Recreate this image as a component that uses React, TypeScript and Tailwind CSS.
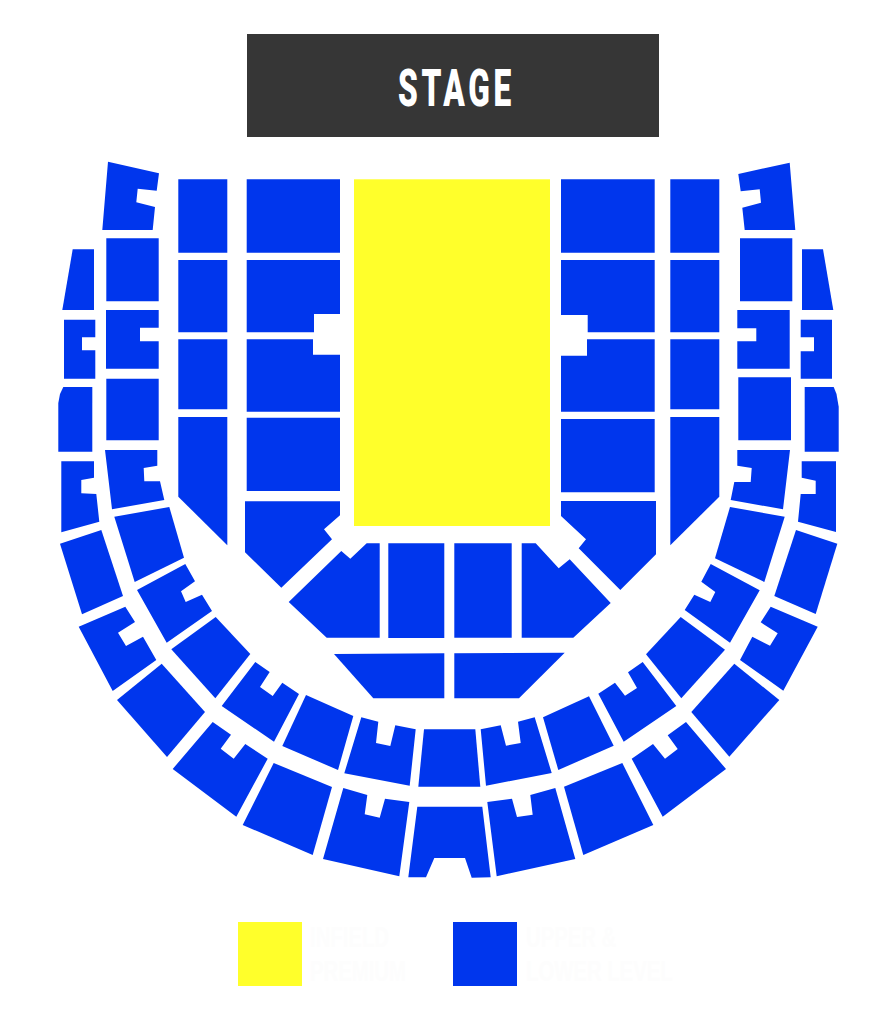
const BLUE = "#0036ed";

// seat blocks, page coordinates (svg viewBox starts at the page origin)
const blocks: string[] = [
  // far left column
  "72.7,249.3 94,249.3 94,310 62.3,310",
  "64,319.7 95.3,319.7 95.3,337.3 82,337.3 82,350.3 95.3,350.3 95.3,378.7 64,378.7",
  "63.3,387 92.3,387 92.3,451.7 58.3,451.7 58.3,403 60,394",
  "61.3,461.3 94,461.3 94,477.7 81.3,480 81.3,493.3 96.3,494 99.3,521.7 61.3,532.3",
  "60,543.7 101.3,530 123,596 82,614.3",
  "78.7,626.7 125.3,606.7 135,622 118,632.7 126,646 143,636.7 156.3,660 112.7,691",
  "117,700 161.7,663.7 205,712 167,757",
  // left column 2
  "108,161.7 159,173.3 156.7,190.7 137.7,188.7 136.3,202.3 155,207 152.7,230 102.3,230",
  "106.3,238.3 158.7,238.3 158.7,301.3 106.3,301.3",
  "106,310 158.7,310 158.7,327.7 140,327.7 140,341.3 158.7,341.3 158.7,368.7 106,368.7",
  "106.3,378.7 158.7,378.7 158.7,440.3 106.3,440.3",
  "105,450 157.3,450 157.3,465.7 143.7,468 144.3,481.3 160,481.3 164.3,500 112,509.3",
  "114.3,516.7 169.3,507 184,557.7 134.7,582",
  "137,590 185.3,564 195,581.3 181,591.3 185.7,602 202,594.7 212,611 166.7,642.7",
  "171.3,649.3 215.7,617 250.3,654 215.3,698.3",
  // left floor columns
  "178.3,179.3 227.3,179.3 227.3,252.7 178.3,252.7",
  "178.3,260 227.3,260 227.3,332.3 178.3,332.3",
  "178.3,339.3 227.3,339.3 227.3,409.3 178.3,409.3",
  "178.3,417 227.3,417 227.3,545.3 178.3,496.7",
  "246.7,179.3 340,179.3 340,252.7 246.7,252.7",
  "246.7,260 340,260 340,314 314,314 314,332.3 246.7,332.3",
  "246.7,339.3 313,339.3 313,354.7 340,354.7 340,411.7 246.7,411.7",
  "246.7,417.7 340,417.7 340,491 246.7,491",
  "245,501.3 340,501.3 340,515.3 324,529.3 332,539.3 281.3,587.7 245,552.3",
  // center floor
  "366.7,543.3 379.7,543.3 379.7,637.7 326.7,637.7 288.7,602 341.3,551 350.3,558.7",
  "388.3,543.3 444.3,543.3 444.3,638 388.3,638",
  "454.3,543.3 511.7,543.3 511.7,637.7 454.3,637.7",
  "521.7,543.3 535.7,543.3 558.7,568.3 569.7,559.3 610.7,603 573.3,637.7 521.7,637.7",
  "334,654 444.3,653.3 444.3,698.3 373.3,698.3",
  "454.3,653.3 564.7,652.7 519,698.3 454.3,698.3",
  // right floor columns
  "561,179.3 654.7,179.3 654.7,252.7 561,252.7",
  "561,260 654.7,260 654.7,332.3 587.7,332.3 587.7,315 561,315",
  "587,339.3 654.7,339.3 654.7,411.7 561,411.7 561,355.7 587,355.7",
  "561,419 654.7,419 654.7,492.3 561,492.3",
  "561,501 656,501 656,554.3 620.3,590 578.7,548.3 586,539.3 561,516",
  "670.3,179.3 719.3,179.3 719.3,252.7 670.3,252.7",
  "670.3,260 719.3,260 719.3,332.3 670.3,332.3",
  "670.3,339.3 719.3,339.3 719.3,409.3 670.3,409.3",
  "670.3,417 719.3,417 719.3,496.7 670.3,545.3",
  // right column 2
  "738.3,174 789.7,162.7 795.3,230 744.7,230 742.3,207.7 761,202.7 759.7,189.3 740.7,191.3",
  "740,238.3 792.3,238.3 792.3,301.3 740,301.3",
  "737.3,310 789.7,310 789.7,368.7 737.3,368.7 737.3,341.3 756.3,341.3 756.3,328.3 737.3,328.3",
  "738.3,377.3 791,377.3 791,440.3 738.3,440.3",
  "730.7,500 734.3,482 750.7,482 751.7,468 737.3,465.7 737.3,450 790,450 783,509.3",
  "715,558.3 730,507 784.7,516.7 764.3,582",
  "684.7,610 694.3,594.7 710.3,602 715.3,592 701.3,581.7 710.7,564 759.7,590.3 730,642.7",
  "646,654.3 680.7,617 725,649.7 681.3,698.3",
  // far right column
  "802,249.3 823,249.3 833.3,310 802,310",
  "800.7,319.7 832,319.7 832,378.7 800.7,378.7 800.7,351.3 814,351.3 814,337.3 800.7,337.3",
  "804.7,387 833.7,387 836.5,394 838.7,406.7 838.7,451.7 804.7,451.7",
  "798,521.7 800.7,494 815.7,494 815.7,480.7 801.7,477.7 801.7,461.3 836,461.3 836,532",
  "774.3,596 796,530 837.3,543.7 815.7,614",
  "740,660 752.3,636.7 770,645.7 777.7,633.3 760.7,622.3 770.7,606.7 817.7,626.7 783.3,690.7",
  "691.3,712 734.3,663.7 779.3,700 729.3,756.7",
  // inner arc
  "221.7,706 255.3,662 269.7,672 260,687 272.7,696 282.3,682.7 299,694 274,741.7",
  "306,695 353.3,716 338,770 282.3,746",
  "361.3,717.3 378.3,721.7 376,743 390.3,746 395.3,725.3 415.7,729.3 409.7,785.7 344.3,773.3",
  "424,729.3 475.3,729.3 480.3,786.7 418.3,786.7",
  "480.7,729.3 500.7,725.3 506,745.7 520.7,743 518,721.7 534.7,717.3 551.7,773 486,785.7",
  "543,717.3 589,696.3 613.7,745.7 558.3,770",
  "598.3,693.7 615,682.7 625,695.7 637,688 628,672.3 642.7,662 676.3,706 623.7,741.7",
  // outer arc
  "212.7,722 231,734.7 220.7,748.7 233.7,758.7 245.3,744 267.7,758.7 236.3,816.7 172.7,769",
  "273.7,763 332,787 312.7,855 242.7,825",
  "343.3,788 367.3,795 364.7,814.3 379.7,817.7 385,798.7 409.3,802 399.3,876.3 323,859",
  "417.3,806.7 482.3,806.7 490.7,877.3 471.7,877.7 465,858 434.3,858 426,877.3 408.3,877.3",
  "487.3,802 512,798.7 517,817 532.7,814.7 530.3,795 555.3,788 575.3,859 496.7,876.3",
  "564,786.7 622.3,763 653.3,825 583.3,855",
  "631.7,758.7 653,744 665,758.7 677.7,749 667.7,735.3 686,722 726,769 662.7,816.7",
];

const SeatMap = () => (
  <svg
    className="block w-[883px] h-[763px]"
    viewBox="0 137 883 763"
    role="img"
    aria-label="Seating map"
  >
    <rect x="354" y="179.3" width="196" height="346.7" fill="#ffff2b" />
    {blocks.map((points) => (
      <polygon key={points} points={points} fill={BLUE} />
    ))}
  </svg>
);

const Legend = ({
  swatch,
  lines,
  gap,
}: {
  swatch: string;
  lines: string[];
  gap: string;
}) => (
  <div className={`flex items-start ${gap}`}>
    <div className={`w-[64px] h-[64px] ${swatch}`}></div>
    <div className="-mt-[2px] flex flex-col text-[#fdfdfd] font-bold font-['Liberation_Sans',sans-serif] text-[29px] leading-[34px] whitespace-nowrap origin-left scale-x-[0.7] w-0">
      {lines.map((line) => (
        <span key={line}>{line}</span>
      ))}
    </div>
  </div>
);

export default function App() {
  return (
    <div className="w-[883px] h-[1024px] bg-white overflow-hidden">
      {/* stage */}
      <div className="pt-[34px] pl-[247px]">
        <div className="w-[412px] h-[103px] bg-[#363636] flex items-center justify-center">
          <span className="pl-[10px] pt-[5px] text-white font-black font-['Roboto',sans-serif] text-[51px] leading-none tracking-[6px] scale-x-[0.62]">
            STAGE
          </span>
        </div>
      </div>

      <SeatMap />

      {/* legend */}
      <div className="pt-[22px] pl-[238px] flex gap-[143px]">
        <Legend swatch="bg-[#ffff2b]" lines={["INFIELD", "PREMIUM"]} gap="gap-[8px]" />
        <Legend swatch="bg-[#0036ed]" lines={["UPPER &", "LOWER LEVEL"]} gap="gap-[9px]" />
      </div>
    </div>
  );
}
